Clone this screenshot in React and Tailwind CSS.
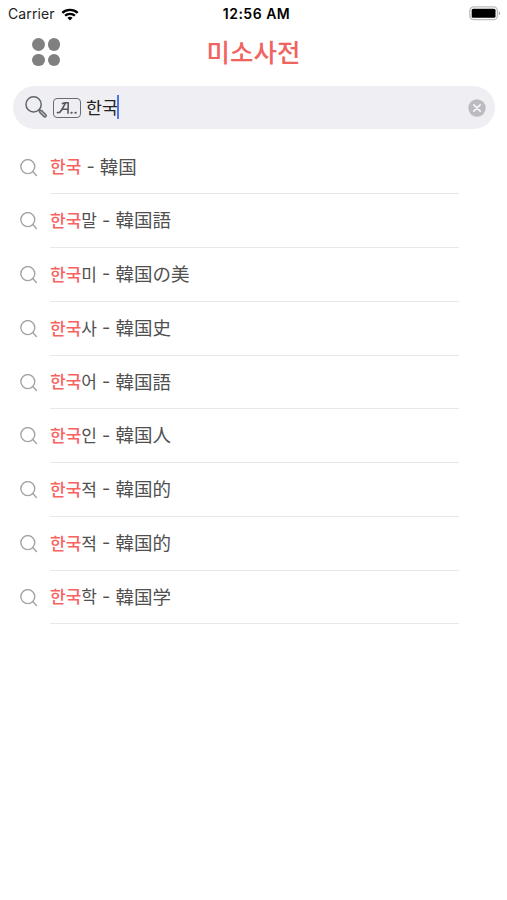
import { useState } from 'react';

const results = [
  { rest: '', meaning: '韓国' },
  { rest: '말', meaning: '韓国語' },
  { rest: '미', meaning: '韓国の美' },
  { rest: '사', meaning: '韓国史' },
  { rest: '어', meaning: '韓国語' },
  { rest: '인', meaning: '韓国人' },
  { rest: '적', meaning: '韓国的' },
  { rest: '적', meaning: '韓国的' },
  { rest: '학', meaning: '韓国学' }
];

function StatusBar() {
  return (
    <div className="grid h-7 grid-cols-3 items-center pl-[8px] pr-[6px] text-black">
      <div className="flex items-center gap-[6px]">
        <span className="text-[14px] leading-none tracking-[0.1px] text-[#222]">Carrier</span>
        <svg width="18" height="13" viewBox="0 0 18 13" fill="none" stroke="#000" strokeWidth="2.3">
          <path d="M1.3 4.8C5.6.8 12.4.8 16.7 4.8" />
          <path d="M4.1 7.7C6.8 5.2 11.2 5.2 13.9 7.7" />
          <path d="M9 12.4 6.4 9.8C7.9 8.5 10.1 8.5 11.6 9.8Z" fill="#000" stroke="none" />
        </svg>
      </div>
      <span className="pl-[4px] text-center text-[14px] font-semibold leading-none tracking-[0.5px]">12:56 AM</span>
      <svg className="-mt-px justify-self-end" width="32" height="15" viewBox="0 0 32 15">
        <rect x="0.8" y="0.8" width="27.6" height="12.9" rx="4" fill="#fff" stroke="#bdbdbd" strokeWidth="1.3" />
        <rect x="2.7" y="2.7" width="23.8" height="9.1" rx="1.5" fill="#000" />
        <path d="M29.8 5.2C31.4 5.9 31.4 8.6 29.8 9.3Z" fill="#9a9a9a" />
      </svg>
    </div>
  );
}

function Header() {
  return (
    <header className="grid h-[48px] grid-cols-[92px_1fr_92px] items-center">
      <button className="ml-[32px] grid w-7 grid-cols-2 gap-[3px]">
        <span className="size-[12.5px] rounded-full bg-[#808080]" />
        <span className="size-[12.5px] rounded-full bg-[#808080]" />
        <span className="size-[12.5px] rounded-full bg-[#808080]" />
        <span className="size-[12.5px] rounded-full bg-[#808080]" />
      </button>
      <h1 className="pb-[3px] text-center font-['Noto_Sans_CJK_KR',sans-serif] text-[25.5px] font-medium leading-none text-[#f0635f]">
        미소사전
      </h1>
    </header>
  );
}

function SearchBar({ keyword, onClear }) {
  return (
    <div className="ml-[13px] mr-[12px] mt-[10px] flex h-[43px] items-center rounded-full bg-[#efeff3] pl-3 pr-[9px]">
      <svg width="23" height="23" viewBox="0 0 23 23" fill="none" stroke="#60666d" strokeLinecap="round">
        <circle cx="8.6" cy="8.4" r="7.6" strokeWidth="1.5" />
        <path d="M13.8 13.8 15.3 15.3" strokeWidth="1.4" />
        <path d="M15.7 15.5 20 19.7" strokeWidth="4" />
        <path d="M15.9 15.7 19.9 19.6" stroke="#b3b7bc" strokeWidth="1.4" />
      </svg>
      <span className="ml-[5px] flex h-5 w-[28px] items-center justify-center rounded-[4px] border border-[#696b70] text-[#56595f]">
        <svg width="22" height="16" viewBox="0 0 22 16" fill="none" stroke="currentColor" strokeWidth="1.6" strokeLinecap="round" strokeLinejoin="round">
          <path d="M1.4 12.6C3.4 13.3 4.6 11.8 5.6 10L9.6 2.8H12.2L12 13.2M5.8 9.2H12M6.4 3.6C7.4 2.9 8.6 2.8 9.6 2.8" />
          <path d="M15.4 12.7H15.7M19.4 12.7H19.7" strokeWidth="2.1" />
        </svg>
      </span>
      <div className="ml-[5px] flex flex-1 items-center">
        <span className="pb-[2px] font-['Noto_Sans_CJK_KR',sans-serif] text-[17.3px] leading-none text-[#222]">{keyword}</span>
        <span className="-ml-px -mt-px h-6 w-[2px] bg-[#4f75e6]" />
      </div>
      <button onClick={onClear} className="flex">
        <svg width="18" height="18" viewBox="0 0 18 18">
          <circle cx="9" cy="9" r="8.7" fill="#bcbcc0" />
          <path d="M5.8 5.8 12.2 12.2M12.2 5.8 5.8 12.2" stroke="#f5f5f8" strokeWidth="1.7" strokeLinecap="round" />
        </svg>
      </button>
    </div>
  );
}

function ResultRow({ rest, meaning }) {
  return (
    <li className="flex h-[53.75px] pl-5">
      <svg className="mt-[18px] shrink-0" width="18" height="18" viewBox="0 0 18 18" fill="none" stroke="#a3a3a3" strokeWidth="1.4" strokeLinecap="round">
        <circle cx="7.8" cy="7.6" r="7" />
        <path d="M12.8 12.6 16.4 16.4" />
      </svg>
      <div className="ml-3 flex w-[409px] items-center border-b border-[#e8e8e8] pb-[2px] leading-none text-[#505050]">
        <span className="font-['Noto_Sans_CJK_KR',sans-serif] text-[17px] font-medium text-[#f8625f]">한국</span>
        <span className="font-['Noto_Sans_CJK_KR',sans-serif] text-[17px]">{rest}</span>
        <span className="w-[18.5px] pt-[2px] text-center text-[18px]">-</span>
        <span className="font-['Noto_Sans_CJK_JP',sans-serif] text-[18.5px]">{meaning}</span>
      </div>
    </li>
  );
}

export default function App() {
  const [keyword, setKeyword] = useState('한국');

  return (
    <div className="min-h-screen w-full bg-white font-['Inter','Noto_Sans_CJK_KR',sans-serif]">
      <StatusBar />
      <Header />
      <SearchBar keyword={keyword} onClear={() => setKeyword('')} />
      <ul className="mt-[11.5px]">
        {results.map((item, index) => (
          <ResultRow key={index} rest={item.rest} meaning={item.meaning} />
        ))}
      </ul>
    </div>
  );
}
